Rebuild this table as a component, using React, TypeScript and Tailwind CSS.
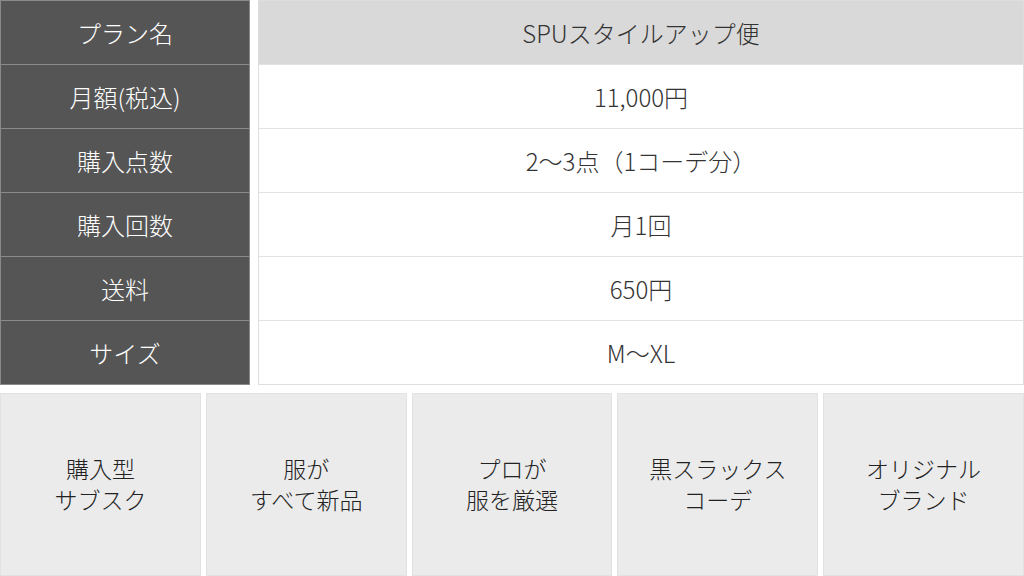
const rows: [string, string][] = [
  ["プラン名", "SPUスタイルアップ便"],
  ["月額(税込)", "11,000円"],
  ["購入点数", "2〜3点（1コーデ分）"],
  ["購入回数", "月1回"],
  ["送料", "650円"],
  ["サイズ", "M〜XL"],
];

const tiles: [string, string][] = [
  ["購入型", "サブスク"],
  ["服が", "すべて新品"],
  ["プロが", "服を厳選"],
  ["黒スラックス", "コーデ"],
  ["オリジナル", "ブランド"],
];

export default function App() {
  return (
    <div
      className="w-[1024px] h-[576px] bg-white overflow-hidden flex flex-col"
      style={{ fontFamily: '"Noto Sans CJK JP", "Noto Sans", sans-serif' }}
    >
      <div className="flex gap-[8px] h-[385px]">
        <div className="w-[250px] flex flex-col border border-[#8a8a8a] bg-[#555555]">
          {rows.map(([label], i) => (
            <div
              key={label}
              className={
                "flex-1 flex items-center justify-center text-white text-[24px] font-light " +
                (i > 0 ? "border-t border-[#8a8a8a]" : "")
              }
            >
              {label}
            </div>
          ))}
        </div>
        <div className="flex-1 flex flex-col border border-[#dedede]">
          {rows.map(([label, value], i) => (
            <div
              key={label}
              className={
                "flex-1 flex items-center justify-center text-[#333333] text-[24px] font-light " +
                (i === 0 ? "bg-[#d9d9d9]" : "bg-white border-t border-[#e2e2e2]")
              }
            >
              {value}
            </div>
          ))}
        </div>
      </div>
      <div className="mt-[8px] flex-1 grid grid-cols-5 gap-[5px]">
        {tiles.map(([a, b]) => (
          <div
            key={a}
            className="bg-[#ebebeb] border border-[#e2e2e2] flex flex-col items-center justify-center text-[#222222] text-[23px] font-light leading-[31px] pb-[2px]"
          >
            <span>{a}</span>
            <span>{b}</span>
          </div>
        ))}
      </div>
    </div>
  );
}
